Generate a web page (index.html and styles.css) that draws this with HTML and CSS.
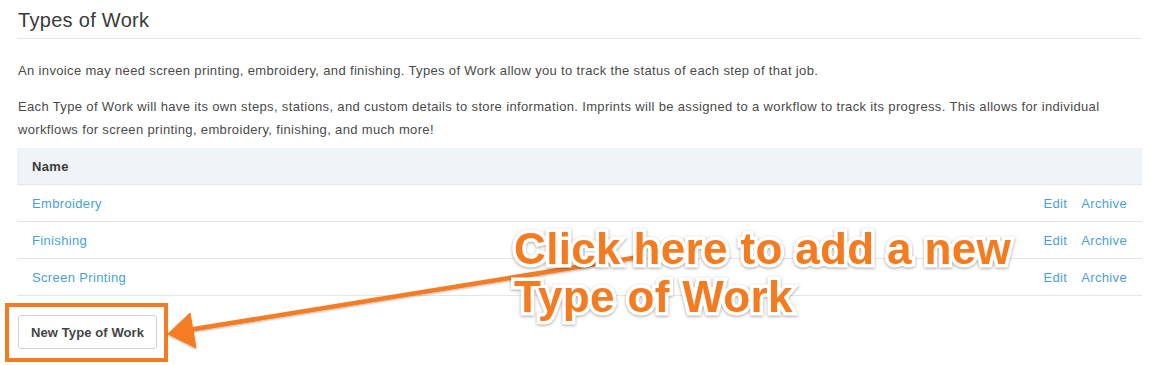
FILE: index.html
```html
<!DOCTYPE html>
<html>
<head>
    <meta charset="UTF-8">
    <title>Types of Work</title>
    <link rel="stylesheet" href="styles.css">
</head>
<body>
<div class="page">
    <h1 class="title">Types of Work</h1>
    <p class="intro">An invoice may need screen printing, embroidery, and finishing. Types of Work allow you to track the status of each step of that job.</p>
    <p class="intro">Each Type of Work will have its own steps, stations, and custom details to store information. Imprints will be assigned to a workflow to track its progress. This allows for individual workflows for screen printing, embroidery, finishing, and much more!</p>

    <table class="work-table">
        <thead>
        <tr><th>Name</th><th></th></tr>
        </thead>
        <tbody>
        <tr>
            <td><a href="#">Embroidery</a></td>
            <td class="actions"><a href="#">Edit</a><a href="#">Archive</a></td>
        </tr>
        <tr>
            <td><a href="#">Finishing</a></td>
            <td class="actions"><a href="#">Edit</a><a href="#">Archive</a></td>
        </tr>
        <tr>
            <td><a href="#">Screen Printing</a></td>
            <td class="actions"><a href="#">Edit</a><a href="#">Archive</a></td>
        </tr>
        </tbody>
    </table>

    <div class="btn-wrap">
        <button class="btn">New Type of Work</button>
    </div>
</div>

<!-- annotation layer -->
<div class="callout">Click here to add a new<br>Type of Work</div>
<svg class="arrow" width="1158" height="365" viewBox="0 0 1158 365">
    <defs>
        <filter id="sh" x="-5%" y="-20%" width="110%" height="140%">
            <feDropShadow dx="0" dy="1" stdDeviation="1" flood-color="#000" flood-opacity="0.3"/>
        </filter>
    </defs>
    <g filter="url(#sh)" fill="#f47b20" stroke="#f47b20">
        <line x1="633" y1="258" x2="188" y2="330" stroke-width="4.5" stroke-linecap="round"/>
        <polygon points="168,334 190,313 196,348" stroke-width="1" stroke-linejoin="round"/>
    </g>
</svg>
</body>
</html>
```

FILE: styles.css
```css
body {
    margin: 0;
    font-family: "Liberation Sans", Helvetica, Arial, sans-serif;
    font-size: 13px;
    letter-spacing: 0.35px;
    color: #4a4a4a;
    background: #fff;
}

.page {
    width: 1125px;
    padding: 10px 0 0 17px;
}

.title {
    margin: 0;
    padding: 0 0 8px 1px;
    font-size: 20px;
    font-weight: normal;
    line-height: 20px;
    letter-spacing: 0.3px;
    color: #3a3a3a;
    border-bottom: 1px solid #e2e5e9;
}

.intro {
    margin: 20px 0 0 1px;
    line-height: 23px;
}

.intro + .intro {
    margin-top: 13px;
}

.work-table {
    width: 100%;
    margin-top: 7px;
    border-collapse: collapse;
}

.work-table th,
.work-table td {
    height: 36px;
    padding: 0 15px;
    text-align: left;
    border-bottom: 1px solid #e2e5e9;
}

.work-table th {
    background: #f0f3f7;
    font-weight: bold;
    color: #3a3a3a;
}

.work-table a {
    color: #4a9fd6;
    text-decoration: none;
}

.work-table .actions {
    text-align: right;
}

.work-table .actions a + a {
    margin-left: 14px;
}

.btn-wrap {
    display: inline-block;
    margin: 7px 0 0 -12px;
    padding: 8px 7px 9px 9px;
    border: 4px solid #f47b20;
}

.btn {
    height: 34px;
    padding: 0 12px;
    font-family: inherit;
    font-size: 13px;
    font-weight: bold;
    letter-spacing: 0.1px;
    color: #444;
    background: #fff;
    border: 1px solid #cfd3d8;
    border-radius: 3px;
}

.callout {
    position: absolute;
    left: 514px;
    top: 225px;
    z-index: 2;
    font-family: "Liberation Sans", Helvetica, Arial, sans-serif;
    font-size: 44px;
    font-weight: bold;
    line-height: 48px;
    letter-spacing: 0.35px;
    color: #f47b20;
    -webkit-text-stroke: 7px #fff;
    paint-order: stroke fill;
    filter: drop-shadow(0 1px 1.5px rgba(0, 0, 0, 0.35));
}

.arrow {
    position: absolute;
    left: 0;
    top: 0;
    z-index: 1;
    pointer-events: none;
}
```
